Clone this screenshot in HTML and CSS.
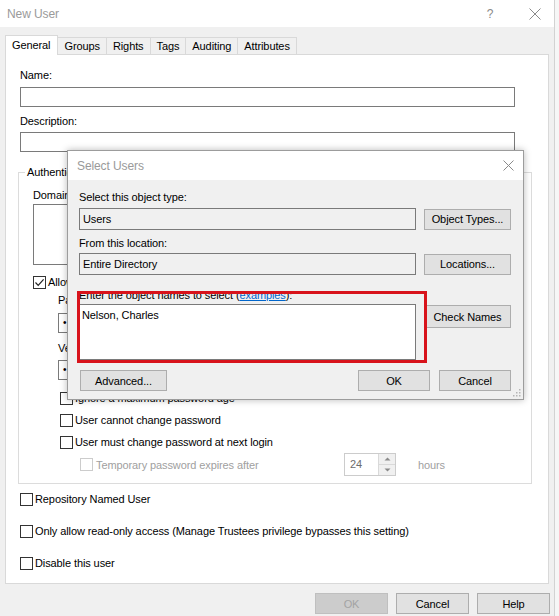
FILE: index.html
```html
<!DOCTYPE html>
<html>
<head>
<meta charset="utf-8">
<link rel="stylesheet" href="styles.css">
</head>
<body>
<div class="window">
  <div class="titlebar">
    <span class="title">New User</span>
    <span class="tb-help">?</span>
    <svg class="tb-close" width="12" height="12" viewBox="0 0 12 12"><path d="M0.5 0.5 L11.5 11.5 M11.5 0.5 L0.5 11.5" stroke="#8a8a8a" stroke-width="1" fill="none"/></svg>
  </div>
  <div class="tabs">
    <div class="tab active">General</div>
    <div class="tab">Groups</div>
    <div class="tab">Rights</div>
    <div class="tab">Tags</div>
    <div class="tab">Auditing</div>
    <div class="tab">Attributes</div>
  </div>
  <div class="panel">
    <div class="lbl lbl-name">Name:</div>
    <div class="field field-name"></div>
    <div class="lbl lbl-desc">Description:</div>
    <div class="field field-desc"></div>

    <div class="group">
      <div class="legend">Authentication</div>
      <div class="lbl lbl-domain">Domain users:</div>
      <div class="listbox"></div>
      <div class="check-row row-allow"><span class="cb"><svg width="11" height="11" viewBox="0 0 11 11"><path d="M1.5 5.5 L4.2 8.3 L9.6 2.4" stroke="#222" stroke-width="1.2" fill="none"/></svg></span>Allow password authentication</div>
      <div class="sub">
        <div class="lbl lbl-pwd">Password:</div>
        <div class="pwd-field">•</div>
        <div class="lbl lbl-ver">Verify password:</div>
        <div class="pwd-field pwd-ver">•</div>
        <div class="check-row row-ignore"><span class="cb"></span>Ignore a maximum password age</div>
        <div class="check-row row-sub"><span class="cb"></span>User cannot change password</div>
        <div class="check-row row-sub"><span class="cb"></span>User must change password at next login</div>
        <div class="temp-row">
          <div class="temp-label"><span class="cb cb-dis"></span>Temporary password expires after</div>
          <div class="spinner">
            <span class="spin-val">24</span>
            <span class="spin-btns">
              <span class="spin-b"><svg width="7" height="4" viewBox="0 0 7 4"><path d="M0.5 3.5 L3.5 0.5 L6.5 3.5 Z" fill="#8a8a8a"/></svg></span>
              <span class="spin-b"><svg width="7" height="4" viewBox="0 0 7 4"><path d="M0.5 0.5 L3.5 3.5 L6.5 0.5 Z" fill="#8a8a8a"/></svg></span>
            </span>
          </div>
          <span class="hours">hours</span>
        </div>
      </div>
    </div>

    <div class="check-row row-repo"><span class="cb"></span>Repository Named User</div>
    <div class="check-row row-gap"><span class="cb"></span>Only allow read-only access (Manage Trustees privilege bypasses this setting)</div>
    <div class="check-row row-gap"><span class="cb"></span>Disable this user</div>
  </div>
  <div class="footer">
    <div class="btn btn-main btn-dis">OK</div>
    <div class="btn btn-main">Cancel</div>
    <div class="btn btn-main">Help</div>
  </div>

  <div class="dialog">
    <div class="dlg-title">
      <span class="dlg-title-text">Select Users</span>
      <svg class="dlg-close" width="11" height="11" viewBox="0 0 11 11"><path d="M0.5 0.5 L10.5 10.5 M10.5 0.5 L0.5 10.5" stroke="#8a8a8a" stroke-width="1" fill="none"/></svg>
    </div>
    <div class="dlg-body">
      <div class="lbl d-lbl1">Select this object type:</div>
      <div class="d-row d-row1">
        <div class="ro-field">Users</div>
        <div class="btn btn-side">Object Types...</div>
      </div>
      <div class="lbl d-lbl2">From this location:</div>
      <div class="d-row d-row2">
        <div class="ro-field">Entire Directory</div>
        <div class="btn btn-side">Locations...</div>
      </div>
      <div class="lbl d-lbl3">Enter the object names to select (<span class="link">examples</span>):</div>
      <div class="d-row d-row3">
        <div class="names">Nelson, Charles</div>
        <div class="btn btn-side btn-check">Check Names</div>
      </div>
      <div class="d-row d-row4">
        <div class="btn btn-adv">Advanced...</div>
        <div class="spacer"></div>
        <div class="btn btn-dlg">OK</div>
        <div class="btn btn-dlg">Cancel</div>
      </div>
    </div>
    <div class="highlight"></div>
    <svg class="grip" width="8" height="8" viewBox="0 0 8 8"><g fill="#b5b5b5"><rect x="6" y="0" width="1.5" height="1.5"/><rect x="3" y="3" width="1.5" height="1.5"/><rect x="6" y="3" width="1.5" height="1.5"/><rect x="0" y="6" width="1.5" height="1.5"/><rect x="3" y="6" width="1.5" height="1.5"/><rect x="6" y="6" width="1.5" height="1.5"/></g></svg>
  </div>
</div>
</body>
</html>
```

FILE: styles.css
```css
* { box-sizing: border-box; }
html, body { margin: 0; padding: 0; }
body {
  font-family: "Liberation Sans", Arial, sans-serif;
  font-size: 11px;
  letter-spacing: -0.1px;
  color: #000;
  background: #f6f6f6;
  width: 559px;
  height: 616px;
  overflow: hidden;
}
.window {
  position: relative;
  width: 555px;
  height: 616px;
  background: #f0f0f0;
  border-right: 1px solid #d2d2d2;
}
.titlebar {
  height: 27px;
  background: #fff;
  display: flex;
  align-items: center;
  padding-left: 7px;
  color: #9a9a9a;
  font-size: 12px;
}
.title { flex: 1; }
.tb-help { width: 10px; text-align: center; color: #8a8a8a; margin-right: 34px; }
.tb-close { margin-right: 13px; }

.tabs {
  height: 27px;
  display: flex;
  align-items: flex-end;
  padding-left: 5px;
  position: relative;
  z-index: 2;
}
.tab {
  height: 17px;
  line-height: 16px;
  padding: 0 6px;
  border: 1px solid #d9d9d9;
  border-bottom: none;
  border-left: none;
  background: #f0f0f0;
}
.tab.active {
  height: 20px;
  line-height: 18px;
  background: #fff;
  border-left: 1px solid #d9d9d9;
  margin-bottom: -1px;
  padding: 0 7px 0 6px;
}

.panel {
  margin-left: 5px;
  width: 544px;
  height: 530px;
  background: #fff;
  border: 1px solid #d9d9d9;
  padding: 0 0 0 14px;
  overflow: hidden;
}
.lbl { height: 14px; line-height: 14px; white-space: nowrap; }
.lbl-name { margin-top: 13px; }
.field {
  width: 495px;
  height: 20px;
  border: 1px solid #7a7a7a;
  background: #fff;
}
.field-name { margin-top: 5px; }
.lbl-desc { margin-top: 7px; }
.field-desc { margin-top: 4px; }

.group {
  position: relative;
  margin-top: 20px;
  margin-left: -2px;
  width: 514px;
  height: 312px;
  border: 1px solid #dcdcdc;
  padding-left: 14px;
}
.legend {
  position: absolute;
  top: -8px;
  left: 6px;
  background: #fff;
  padding: 0 2px;
  line-height: 14px;
}
.lbl-domain { margin-top: 15px; }
.listbox {
  margin-top: 2px;
  width: 484px;
  height: 61px;
  border: 1px solid #7a7a7a;
  background: #fff;
}
.check-row {
  display: flex;
  align-items: center;
  height: 14px;
  gap: 2px;
  white-space: nowrap;
}
.cb {
  width: 13px;
  height: 13px;
  border: 1px solid #333;
  background: #fff;
  display: flex;
  align-items: center;
  justify-content: center;
  flex: none;
}
.cb-dis { border-color: #cccccc; }
.row-allow { margin-top: 10px; }
.sub { margin-left: 25px; }
.lbl-pwd { margin-top: 4px; }
.pwd-field {
  margin-top: 6px;
  width: 440px;
  height: 20px;
  border: 1px solid #7a7a7a;
  background: #fff;
  line-height: 18px;
  padding-left: 4px;
  font-size: 10px;
}
.lbl-ver { margin-top: 8px; }
.pwd-ver { margin-top: 5px; }
.row-ignore { margin-top: 11px; margin-left: 2px; }
.row-sub { margin-top: 8px; margin-left: 2px; }
.temp-row {
  margin-top: 4px;
  height: 23px;
  display: flex;
  align-items: center;
}
.temp-label {
  width: 286px;
  display: flex;
  align-items: center;
  gap: 3px;
  padding-left: 22px;
  color: #a0a0a0;
  white-space: nowrap;
}
.spinner {
  width: 52px;
  height: 23px;
  border: 1px solid #cccccc;
  display: flex;
  background: #fff;
}
.spin-val { flex: 1; line-height: 21px; padding-left: 5px; color: #6d6d6d; }
.spin-btns {
  width: 17px;
  display: flex;
  flex-direction: column;
  border-left: 1px solid #d9d9d9;
  background: #f0f0f0;
}
.spin-b {
  flex: 1;
  display: flex;
  align-items: center;
  justify-content: center;
}
.spin-b + .spin-b { border-top: 1px solid #d9d9d9; }
.hours { margin-left: 22px; color: #a0a0a0; }

.row-repo { margin-top: 8px; }
.row-gap { margin-top: 18px; }

.footer {
  margin-top: 9px;
  display: flex;
  justify-content: flex-end;
  gap: 8px;
  padding-right: 4px;
}
.btn {
  display: flex;
  align-items: center;
  justify-content: center;
  background: #e1e1e1;
  border: 1px solid #adadad;
  white-space: nowrap;
  flex: none;
}
.btn-main { width: 73px; height: 21px; }
.btn-dis { background: #cccccc; border-color: #bfbfbf; color: #a3a3a3; }

.dialog {
  position: absolute;
  left: 67px;
  top: 150px;
  width: 457px;
  height: 250px;
  background: #f0f0f0;
  border: 1px solid #9c9c9c;
  box-shadow: 0 0 7px rgba(0, 0, 0, 0.28);
  z-index: 5;
}
.dlg-title {
  height: 29px;
  background: #fff;
  display: flex;
  align-items: center;
  padding-left: 9px;
  color: #9a9a9a;
  font-size: 12px;
}
.dlg-title-text { flex: 1; }
.dlg-close { margin-right: 9px; }
.dlg-body { padding: 0 12px 0 11px; }
.d-row { display: flex; align-items: center; gap: 8px; }
.d-lbl1 { margin-top: 10px; }
.d-row1 { margin-top: 4px; }
.d-lbl2 { margin-top: 6px; }
.d-row2 { margin-top: 3px; }
.d-lbl3 { margin-top: 13px; }
.d-row3 { margin-top: 2px; align-items: flex-start; }
.d-row4 { margin-top: 10px; gap: 9px; }
.ro-field {
  width: 337px;
  height: 22px;
  border: 1px solid #7a7a7a;
  background: #f0f0f0;
  line-height: 20px;
  padding-left: 3px;
}
.btn-side { width: 87px; height: 21px; }
.btn-check { height: 23px; margin-top: 1px; }
.names {
  width: 337px;
  height: 56px;
  border: 1px solid #7a7a7a;
  background: #fff;
  line-height: 14px;
  padding: 3px 0 0 2px;
}
.link { color: #0066cc; text-decoration: underline; }
.btn-adv { width: 87px; height: 21px; margin-left: 1px; }
.spacer { flex: 1; }
.btn-dlg { width: 72px; height: 21px; }
.highlight {
  position: absolute;
  left: 9px;
  top: 140px;
  width: 350px;
  height: 72px;
  border: 3px solid #d8131b;
  pointer-events: none;
}
.grip {
  position: absolute;
  right: 2px;
  bottom: 2px;
}
```
